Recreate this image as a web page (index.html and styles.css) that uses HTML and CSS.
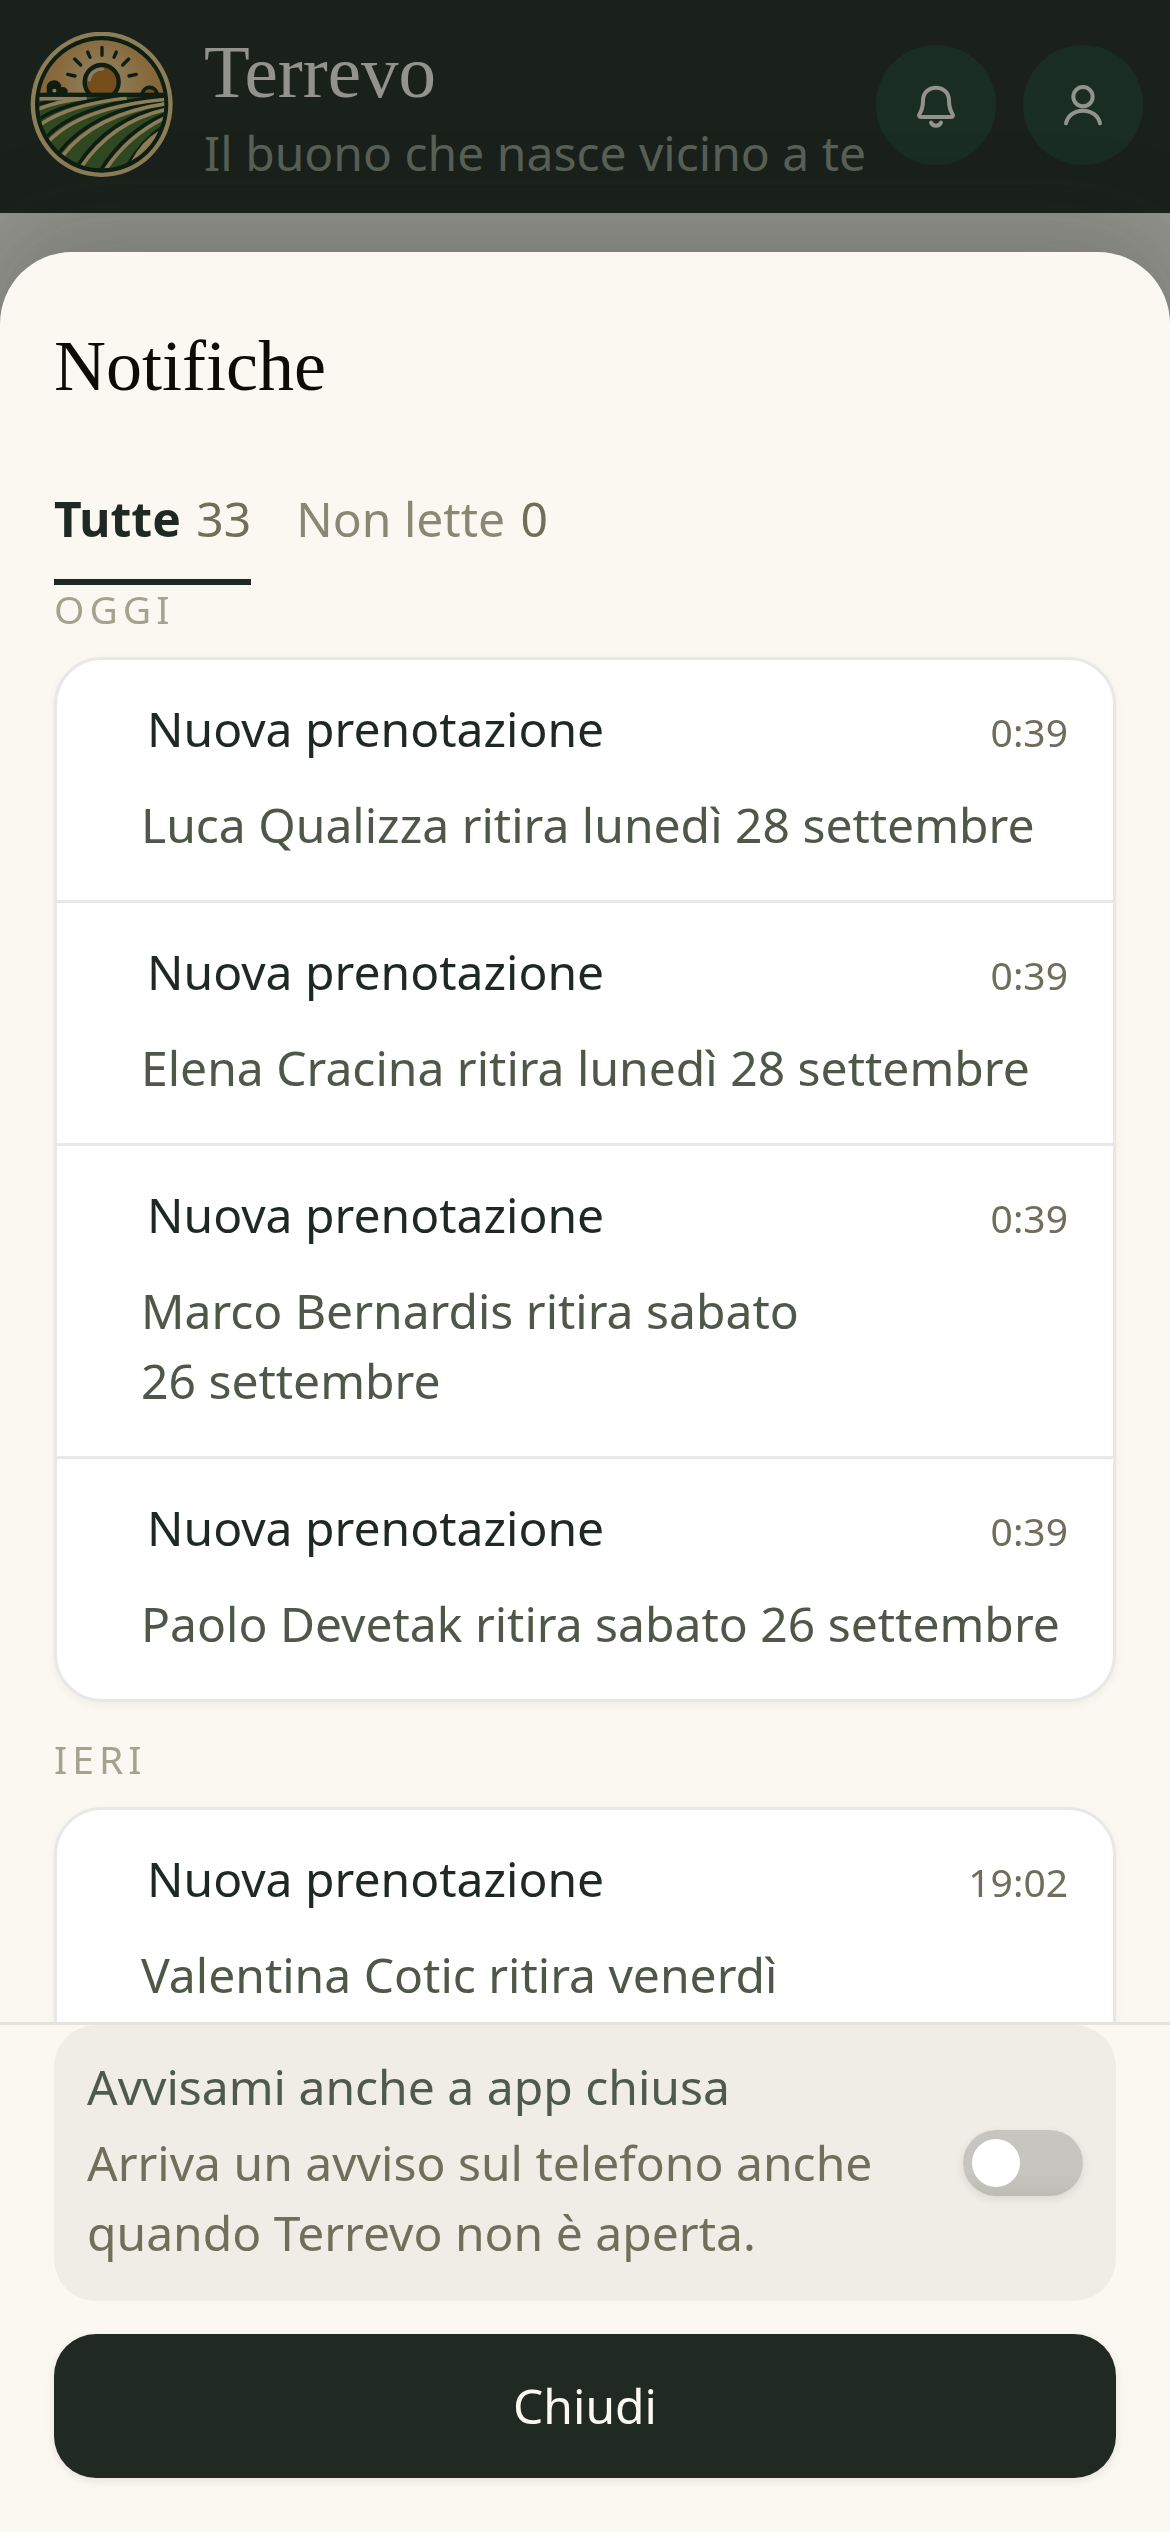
FILE: index.html
```html
<!DOCTYPE html>
<html lang="it">
<head>
    <meta charset="UTF-8">
    <meta name="viewport" content="width=device-width, initial-scale=1.0">
    <title>Terrevo</title>
    <link rel="stylesheet" href="styles.css">
</head>
<body>
    <header class="topbar">
        <svg class="logo" viewBox="30 36 432 438" aria-hidden="true">
            <defs>
                <radialGradient id="sky" gradientUnits="userSpaceOnUse" cx="245" cy="190" r="170">
                    <stop offset="0.3" stop-color="#f0cf90"/>
                    <stop offset="0.75" stop-color="#e9b167"/>
                    <stop offset="1" stop-color="#e4a95c"/>
                </radialGradient>
                <clipPath id="disc"><ellipse cx="245" cy="253" rx="188" ry="192"/></clipPath>
                <clipPath id="above"><rect x="30" y="36" width="432" height="184"/></clipPath>
                <clipPath id="field"><rect x="58" y="230" width="376" height="230"/></clipPath>
            </defs>
            <ellipse cx="245" cy="253" rx="213" ry="218" fill="#f1d292"/>
            <ellipse cx="245" cy="253" rx="200" ry="205" fill="#0b2615"/>
            <g clip-path="url(#disc)">
                <g clip-path="url(#above)">
                    <rect x="45" y="50" width="400" height="180" fill="url(#sky)"/>
                    <circle cx="245" cy="186" r="51" fill="#c57d25" stroke="#0b2615" stroke-width="13"/>
                    <path d="M208 180C210 160 226 147 248 147" fill="none" stroke="#e8d3ae" stroke-width="9" stroke-linecap="round"/>
                    <path d="M246 82V106M203 96L210 112M289 96L282 112M164 117L182 135M326 117L308 135M143 163L165 168M349 163L327 168" stroke="#0b2615" stroke-width="10" stroke-linecap="round"/>
                    <path d="M80 222V200A22 20 0 0 1 124 202A14 13 0 0 1 140 222Z" fill="#0b2615"/>
                    <circle cx="103" cy="212" r="6" fill="#f1d292"/>
                    <path d="M366 222A24 28 0 0 1 412 222" fill="#c57d25" stroke="#0b2615" stroke-width="11"/>
                </g>
                <rect x="45" y="218" width="400" height="13" fill="#0b2615"/>
                <g clip-path="url(#field)">
                    <rect x="45" y="231" width="400" height="220" fill="#487432"/>
                    <g fill="none" stroke="#0b2615" stroke-width="11">
                        <path d="M40 258Q90 240 160 234"/>
                        <path d="M50 302Q130 246 300 229"/>
                        <path d="M78 352Q175 249 440 229"/>
                        <path d="M115 400Q215 271 440 240"/>
                        <path d="M172 438Q265 293 440 258"/>
                        <path d="M241 453Q310 336 440 280"/>
                        <path d="M320 440Q365 360 440 312"/>
                    </g>
                    <g fill="none" stroke="#f1d292" stroke-width="11">
                        <path d="M45 236H178"/>
                        <path d="M45 272Q100 245 200 234"/>
                        <path d="M58 316Q145 254 320 234"/>
                        <path d="M86 364Q185 260 440 238"/>
                        <path d="M127 408Q225 282 440 251"/>
                        <path d="M183 442Q277 304 440 268"/>
                        <path d="M253 455Q322 347 440 291"/>
                    </g>
                    <path d="M333 424Q362 366 416 332Q392 396 333 424Z" fill="#f1d292"/>
                    <path d="M333 428Q398 394 420 332" fill="none" stroke="#0b2615" stroke-width="6"/>
                </g>
            </g>
        </svg>
        <div class="brand">
            <div class="brand-name">Terrevo</div>
            <div class="brand-claim">Il buono che nasce vicino a te</div>
        </div>
        <div class="topbar-actions">
            <button type="button" class="icon-btn" aria-label="Notifiche">
                <svg viewBox="198 225 180 180" aria-hidden="true">
                    <path d="M288 263C266 263 249 279 249 301C249 323 246 331 238 343C235 348 238 351 242 351H334C338 351 341 348 338 343C330 331 327 323 327 301C327 279 310 263 288 263Z"/>
                    <path d="M273 368Q277 377 288 377T303 368"/>
                </svg>
            </button>
            <button type="button" class="icon-btn" aria-label="Profilo">
                <svg viewBox="639 225 180 180" aria-hidden="true">
                    <circle cx="729" cy="290" r="29"/>
                    <path d="M678 370C683 347 703 332 729 332S775 347 780 370"/>
                </svg>
            </button>
        </div>
    </header>

    <div class="overlay">
        <section class="sheet" role="dialog" aria-labelledby="sheetTitle">
            <h1 id="sheetTitle">Notifiche</h1>
            <div class="tabs">
                <button type="button" class="tab active">Tutte <span class="count">33</span></button>
                <button type="button" class="tab">Non lette <span class="count">0</span></button>
            </div>

            <div class="list">
                <h2>Oggi</h2>
                <ul class="card">
                    <li>
                        <div class="row-head"><span class="row-title">Nuova prenotazione</span><time>0:39</time></div>
                        <p>Luca Qualizza ritira lunedì 28&nbsp;settembre</p>
                    </li>
                    <li>
                        <div class="row-head"><span class="row-title">Nuova prenotazione</span><time>0:39</time></div>
                        <p>Elena Cracina ritira lunedì 28&nbsp;settembre</p>
                    </li>
                    <li>
                        <div class="row-head"><span class="row-title">Nuova prenotazione</span><time>0:39</time></div>
                        <p>Marco Bernardis ritira sabato 26&nbsp;settembre</p>
                    </li>
                    <li>
                        <div class="row-head"><span class="row-title">Nuova prenotazione</span><time>0:39</time></div>
                        <p>Paolo Devetak ritira sabato 26&nbsp;settembre</p>
                    </li>
                </ul>
                <h2>Ieri</h2>
                <ul class="card">
                    <li>
                        <div class="row-head"><span class="row-title">Nuova prenotazione</span><time>19:02</time></div>
                        <p>Valentina Cotic ritira venerdì</p>
                    </li>
                </ul>
            </div>

            <div class="sheet-footer">
                <div class="push">
                    <div class="push-text">
                        <label for="pushToggle">Avvisami anche a app chiusa</label>
                        <p>Arriva un avviso sul telefono anche quando Terrevo non è aperta.</p>
                    </div>
                    <input type="checkbox" id="pushToggle" class="toggle">
                </div>
                <button type="button" class="close-btn">Chiudi</button>
            </div>
        </section>
    </div>
</body>
</html>
```
FILE: styles.css
```css
* {
    box-sizing: border-box;
}
body {
    margin: 0;
    background-color: #FBF8F1;
    color: #1F2923;
    font-family: "Noto Sans", sans-serif;
    font-size: 48px;
    line-height: 70px;
}
h1, h2, p, ul {
    margin: 0;
    padding: 0;
    font-weight: 400;
}
button {
    font: inherit;
    color: inherit;
    border: none;
    padding: 0;
    background: none;
    cursor: pointer;
}

/* top bar */
.topbar {
    display: flex;
    align-items: center;
    padding: 30px 27px 33px 30px;
    background-color: #202A23;
}
.logo {
    width: 144px;
    height: 146px;
    margin-right: 30px;
    flex: none;
}
.brand {
    flex: 1;
    min-width: 0;
    white-space: nowrap;
}
.brand-name {
    margin-bottom: 12px;
    font-family: "Liberation Serif", serif;
    font-size: 75px;
    line-height: 84px;
    color: #FBF8F1;
}
.brand-claim {
    line-height: 54px;
    color: #919D90;
}
.topbar-actions {
    display: flex;
    gap: 27px;
}
.icon-btn {
    display: flex;
    align-items: center;
    justify-content: center;
    width: 120px;
    height: 120px;
    border-radius: 50%;
    background-color: #1F4032;
}
.icon-btn svg {
    width: 60px;
    height: 60px;
    fill: none;
    stroke: #FBF8F1;
    stroke-width: 12;
    stroke-linecap: round;
    stroke-linejoin: round;
}

/* bottom sheet */
.overlay {
    position: fixed;
    inset: 0;
    padding-top: 252px;
    background-color: rgba(19, 22, 18, 0.45);
}
.sheet {
    display: flex;
    flex-direction: column;
    height: 100%;
    border-radius: 72px 72px 0 0;
    background-color: #FBF8F1;
    box-shadow: 0 -24px 96px rgba(31, 41, 35, 0.24);
}
.sheet h1 {
    padding: 72px 54px 0;
    font-family: "Liberation Serif", serif;
    font-size: 72px;
    line-height: 84px;
    color: #0C0B06;
}
.tabs {
    display: flex;
    gap: 45px;
    padding: 54px 54px 0;
}
.tab {
    height: 123px;
    padding-bottom: 3px;
    border-bottom: 6px solid transparent;
    color: #8A8875;
}
.tab.active {
    border-color: #1F2923;
    color: #1F2923;
    font-weight: 700;
}
.count {
    margin-left: 3px;
    color: #716E5A;
    font-weight: 400;
}
.list {
    flex: 1;
    min-height: 0;
    overflow: hidden;
    margin-top: -6px;
    padding: 6px 54px 0;
}
.list h2 {
    padding-bottom: 24px;
    font-size: 39px;
    line-height: 48px;
    letter-spacing: 5px;
    text-transform: uppercase;
    color: #A5A38F;
}
.card {
    min-height: 312px;
    margin-bottom: 33px;
    list-style: none;
    background-color: #FFFFFF;
    border: 3px solid #E8E8E8;
    border-radius: 48px;
    box-shadow: 0 3px 9px rgba(31, 41, 35, 0.05);
}
.card li {
    padding: 34px 45px 40px 84px;
}
.card li + li {
    border-top: 3px solid #E8E8E8;
}
.row-head {
    display: flex;
    justify-content: space-between;
    align-items: baseline;
    padding-left: 6px;
    margin-bottom: 26px;
}
.row-head time {
    font-size: 39px;
    line-height: 54px;
    color: #716D5B;
}
.card p {
    color: #4F5848;
}

/* footer */
.sheet-footer {
    padding: 0 54px 54px;
    border-top: 3px solid #E5E3DC;
}
.push {
    display: flex;
    align-items: center;
    justify-content: space-between;
    gap: 36px;
    padding: 27px 33px;
    margin-bottom: 33px;
    border-radius: 42px;
    background-color: #F0EDE6;
}
.push-text {
    padding-bottom: 6px;
}
.push label {
    display: block;
    margin-bottom: 6px;
    color: #4F5A4E;
}
.push p {
    color: #716F5B;
}
.toggle {
    appearance: none;
    flex: none;
    width: 120px;
    height: 66px;
    margin: 0;
    padding: 9px;
    border-radius: 33px;
    background: linear-gradient(#C6C5C0 65%, #BDBCB3);
    box-shadow: 0 3px 9px rgba(31, 41, 35, 0.1);
    cursor: pointer;
}
.toggle::before {
    content: "";
    display: block;
    width: 48px;
    height: 48px;
    border-radius: 50%;
    background-color: #FFFFFF;
}
.toggle:checked {
    background: #1F4432;
}
.toggle:checked::before {
    margin-left: auto;
}
.close-btn {
    display: block;
    width: 100%;
    height: 144px;
    border-radius: 42px;
    background-color: #202A23;
    color: #FBF8F1;
    box-shadow: 0 3px 9px rgba(31, 41, 35, 0.1);
}
```
